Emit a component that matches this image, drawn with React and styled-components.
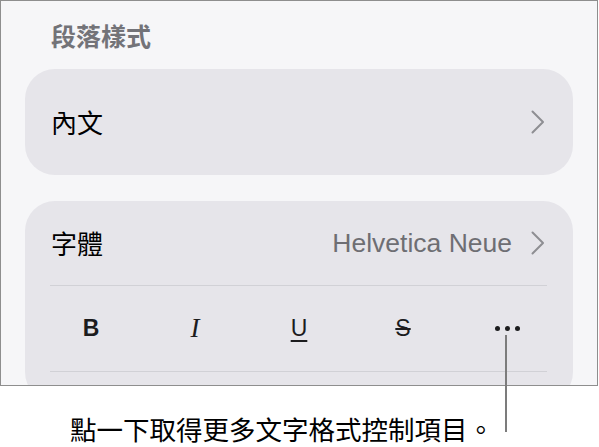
import React from "react";
import styled, { createGlobalStyle } from "styled-components";

const GlobalStyle = createGlobalStyle`
  body {
    margin: 0;
    background: #ffffff;
    font-family: "Liberation Sans", "Noto Sans CJK TC", sans-serif;
  }
`;

const Page = styled.div`
  position: relative;
  width: 599px;
  height: 447px;
  overflow: hidden;
`;

const Frame = styled.div`
  box-sizing: border-box;
  width: 598px;
  height: 386px;
  border: 1px solid #8e8e8e;
  background: #f6f6f8;
  padding: 0 24px;
  overflow: hidden;
`;

const SectionTitle = styled.div`
  font-family: "Noto Sans CJK TC", sans-serif;
  font-size: 25px;
  font-weight: 700;
  color: #737378;
  line-height: 30px;
  padding: 19px 0 0 26px;
  height: 49px;
`;

const Card = styled.div`
  background: #e6e5ea;
  border-radius: 30px;
  margin-top: ${({ $gap }) => $gap || 0}px;
`;

const Row = styled.div`
  display: flex;
  align-items: center;
  justify-content: space-between;
  height: ${({ $h }) => $h}px;
  padding: 0 28px 0 26px;
`;

const Label = styled.span`
  font-family: "Noto Sans CJK TC", sans-serif;
  font-size: 26px;
  color: #000;
  line-height: 30px;
`;

const Value = styled.div`
  display: flex;
  align-items: center;
  gap: 19px;
  font-family: "Liberation Sans", Arial, sans-serif;
  font-size: 26.5px;
  color: #6e6e73;
`;

const Divider = styled.div`
  height: 1px;
  background: #d1d1d6;
  margin: 0 26px 0 25px;
`;

const FormatRow = styled.div`
  display: grid;
  grid-template-columns: repeat(5, 1fr);
  align-items: center;
  height: 85px;
  padding: 0 14px;
`;

const FormatButton = styled.span`
  display: flex;
  justify-content: center;
  align-items: center;
  font-size: ${({ $size }) => $size || 23}px;
  color: #1c1c1e;
  font-family: ${({ $serif }) =>
    $serif ? '"Liberation Serif", serif' : '"Liberation Sans", Arial, sans-serif'};
  font-weight: ${({ $bold }) => ($bold ? 700 : 400)};
  font-style: ${({ $italic }) => ($italic ? "italic" : "normal")};
  text-decoration: ${({ $deco }) => $deco || "none"};
  text-decoration-thickness: 1.5px;
  text-underline-offset: 4px;
`;

const Dots = styled.span`
  display: flex;
  gap: 5px;
  & > i {
    width: 5px;
    height: 5px;
    border-radius: 50%;
    background: #1c1c1e;
  }
`;

const Caption = styled.div`
  padding: 29px 0 0 70px;
  font-family: "Noto Sans CJK TC", sans-serif;
  font-size: 26.5px;
  line-height: 28px;
  color: #000;
`;

const Leader = styled.div`
  position: absolute;
  left: 505px;
  top: 335px;
  width: 2px;
  height: 97px;
  background: #7c7c7c;
`;

const Chevron = () => (
  <svg width="14" height="24" viewBox="0 0 14 24">
    <path
      d="M1.5 1.5 L12 12 L1.5 22.5"
      fill="none"
      stroke="#8e8e93"
      strokeWidth="2"
      strokeLinecap="round"
      strokeLinejoin="round"
    />
  </svg>
);

export default function App() {
  return (
    <Page>
      <GlobalStyle />
      <Frame>
        <SectionTitle>段落樣式</SectionTitle>
        <Card>
          <Row $h={106}>
            <Label>內文</Label>
            <Chevron />
          </Row>
        </Card>
        <Card $gap={26}>
          <Row $h={84}>
            <Label>字體</Label>
            <Value>
              Helvetica Neue
              <Chevron />
            </Value>
          </Row>
          <Divider />
          <FormatRow>
            <FormatButton $bold>B</FormatButton>
            <FormatButton $serif $italic $size={27}>I</FormatButton>
            <FormatButton $deco="underline">U</FormatButton>
            <FormatButton $deco="line-through">S</FormatButton>
            <FormatButton>
              <Dots>
                <i />
                <i />
                <i />
              </Dots>
            </FormatButton>
          </FormatRow>
          <Divider />
          <Row $h={30} />
        </Card>
      </Frame>
      <Caption>點一下取得更多文字格式控制項目。</Caption>
      <Leader />
    </Page>
  );
}
